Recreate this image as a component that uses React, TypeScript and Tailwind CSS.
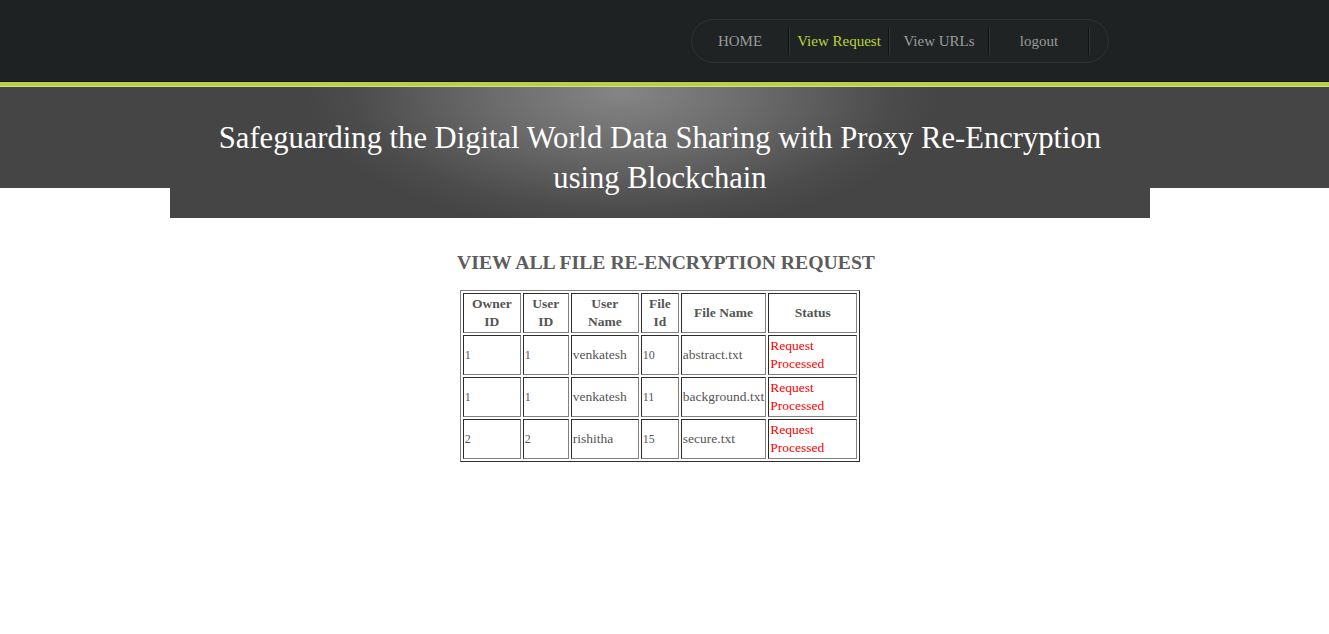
import React from "react";

const rows = [
  { owner: "1", user: "1", name: "venkatesh", file: "10", fname: "abstract.txt" },
  { owner: "1", user: "1", name: "venkatesh", file: "11", fname: "background.txt" },
  { owner: "2", user: "2", name: "rishitha", file: "15", fname: "secure.txt" },
];

const navItems = [
  { label: "HOME", active: false, w: "w-[96px]" },
  { label: "View Request", active: true, w: "w-[98px]" },
  { label: "View URLs", active: false, w: "w-[98px]" },
  { label: "logout", active: false, w: "w-[98px]" },
];

const bannerBg =
  "bg-[#454545] bg-fixed bg-[radial-gradient(ellipse_320px_140px_at_622px_92px,#858585_0%,#6c6c6c_40%,#4b4b4b_85%,#454545_100%)]";

const cellBase =
  "border border-[#808080] [border-style:inset] p-[1px] h-[40px] align-middle";

export default function App() {
  return (
    <div className="min-h-[634px] bg-white font-['Liberation_Serif',serif]">
      {/* top bar */}
      <div className="h-[82px] bg-[#1f2222] border-b border-[#121414]">
        <div className="ml-[170px] w-[980px] flex justify-end pr-[41px] pt-[19px]">
          <nav className="flex h-[44px] items-center rounded-full border border-[#2e3232] bg-[#202323] pr-[18px]">
            {navItems.map((item) => (
              <div key={item.label} className="flex items-center">
                <a
                  className={`${item.w} text-center text-[15px] leading-[20px] ${
                    item.active ? "text-[#bcd53a]" : "text-[#9a9c9c]"
                  }`}
                >
                  {item.label}
                </a>
                <span className="flex h-[28px]">
                  <span className="w-px bg-[#111313]" />
                  <span className="w-px bg-[#2f3434]" />
                </span>
              </div>
            ))}
          </nav>
        </div>
      </div>
      {/* green line */}
      <div className="h-[4px] bg-[#bccf46]" />
      <div className="h-px bg-[#d3df8a]" />

      {/* banner */}
      <div className="relative">
        <div className={`absolute inset-x-0 top-0 h-[101px] ${bannerBg}`} />
        <div className={`relative ml-[170px] w-[980px] h-[131px] ${bannerBg} px-[36px] pt-[31px]`}>
          <h1 className="text-center text-[30.6px] leading-[40px] text-white font-normal">
            Safeguarding the Digital World Data Sharing with Proxy Re-Encryption using Blockchain
          </h1>
        </div>
      </div>

      {/* content */}
      <div className="ml-[170px] w-[980px] flex flex-col items-center pt-[33px]">
        <h2 className="text-[19.7px] leading-[22px] font-bold text-[#5c5c5c] translate-x-[6px]">
          VIEW ALL FILE RE-ENCRYPTION REQUEST
        </h2>
        <table className="mt-[17px] border border-[#808080] [border-style:outset] border-separate border-spacing-[2px] text-[13.5px] leading-[18px] text-[#555555]">
          <thead>
            <tr>
              <th className={`${cellBase} w-[58px] font-bold text-center`}>Owner<br />ID</th>
              <th className={`${cellBase} w-[46px] font-bold text-center`}>User<br />ID</th>
              <th className={`${cellBase} w-[68px] font-bold text-center`}>User<br />Name</th>
              <th className={`${cellBase} w-[38px] font-bold text-center`}>File<br />Id</th>
              <th className={`${cellBase} w-[85px] font-bold text-center`}>File Name</th>
              <th className={`${cellBase} w-[89px] font-bold text-center`}>Status</th>
            </tr>
          </thead>
          <tbody>
            {rows.map((r, i) => (
              <tr key={i}>
                <td className={`${cellBase} text-[12px] text-[#555555]`}>{r.owner}</td>
                <td className={`${cellBase} text-[12px] text-[#555555]`}>{r.user}</td>
                <td className={cellBase}>{r.name}</td>
                <td className={`${cellBase} text-[12px] text-[#555555]`}>{r.file}</td>
                <td className={`${cellBase} whitespace-nowrap`}>{r.fname}</td>
                <td className={`${cellBase} text-[#ff0000]`}>
                  Request<br />Processed
                </td>
              </tr>
            ))}
          </tbody>
        </table>
      </div>
    </div>
  );
}
